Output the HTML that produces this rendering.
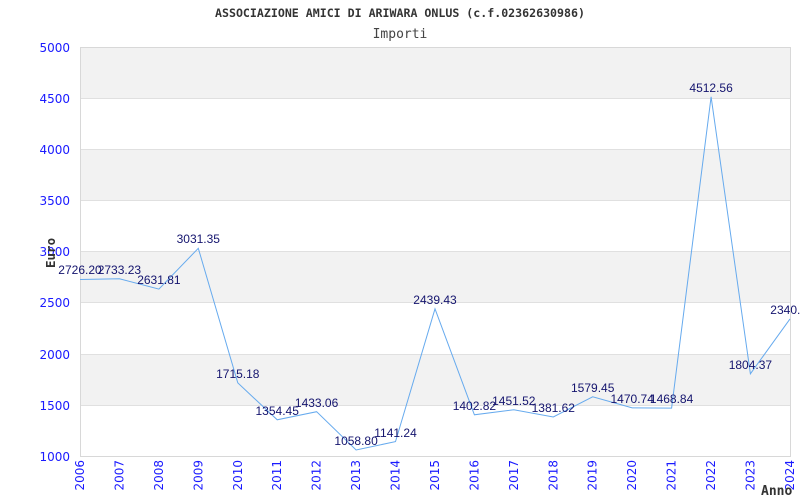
<!DOCTYPE html>
<html><head><meta charset="utf-8"><style>
html,body{margin:0;padding:0;background:#fff;width:800px;height:500px;overflow:hidden}
svg{display:block}
.t{font-family:"DejaVu Sans Mono","Liberation Mono",monospace}
.l{font-family:"Liberation Sans",sans-serif;font-size:12px;fill:#14146e;text-anchor:middle}
.ax{font-family:"DejaVu Sans","Liberation Sans",sans-serif;font-size:12px;fill:#1a1aff}
</style></head><body>
<svg width="800" height="500" xmlns="http://www.w3.org/2000/svg">
<text x="400" y="17" class="t" font-size="11.6" font-weight="bold" fill="#333" text-anchor="middle">ASSOCIAZIONE AMICI DI ARIWARA ONLUS (c.f.02362630986)</text>
<text x="400" y="38" class="t" font-size="13" fill="#444" text-anchor="middle">Importi</text>
<rect x="80" y="47" width="710" height="409" fill="#fff"/>
<rect x="80" y="47" width="710" height="51" fill="#f2f2f2"/>
<rect x="80" y="149" width="710" height="51" fill="#f2f2f2"/>
<rect x="80" y="251" width="710" height="51" fill="#f2f2f2"/>
<rect x="80" y="354" width="710" height="51" fill="#f2f2f2"/>
<g stroke="#e0e0e0" stroke-width="1">
<line x1="80" y1="98.5" x2="790" y2="98.5"/><line x1="80" y1="149.5" x2="790" y2="149.5"/>
<line x1="80" y1="200.5" x2="790" y2="200.5"/><line x1="80" y1="251.5" x2="790" y2="251.5"/>
<line x1="80" y1="302.5" x2="790" y2="302.5"/><line x1="80" y1="354.5" x2="790" y2="354.5"/>
<line x1="80" y1="405.5" x2="790" y2="405.5"/>
</g>
<rect x="80.5" y="47.5" width="710" height="409" fill="none" stroke="#d8d8d8"/>
<g class="ax" text-anchor="end">
<text x="70" y="52">5000</text><text x="70" y="103">4500</text><text x="70" y="154">4000</text>
<text x="70" y="205">3500</text><text x="70" y="256">3000</text><text x="70" y="307">2500</text>
<text x="70" y="359">2000</text><text x="70" y="410">1500</text><text x="70" y="461">1000</text>
</g>
<g class="ax" text-anchor="end">
<text transform="translate(84,460) rotate(-90)">2006</text>
<text transform="translate(123.4,460) rotate(-90)">2007</text>
<text transform="translate(162.9,460) rotate(-90)">2008</text>
<text transform="translate(202.3,460) rotate(-90)">2009</text>
<text transform="translate(241.8,460) rotate(-90)">2010</text>
<text transform="translate(281.2,460) rotate(-90)">2011</text>
<text transform="translate(320.6,460) rotate(-90)">2012</text>
<text transform="translate(360.1,460) rotate(-90)">2013</text>
<text transform="translate(399.5,460) rotate(-90)">2014</text>
<text transform="translate(439,460) rotate(-90)">2015</text>
<text transform="translate(478.4,460) rotate(-90)">2016</text>
<text transform="translate(517.8,460) rotate(-90)">2017</text>
<text transform="translate(557.3,460) rotate(-90)">2018</text>
<text transform="translate(596.7,460) rotate(-90)">2019</text>
<text transform="translate(636.2,460) rotate(-90)">2020</text>
<text transform="translate(675.6,460) rotate(-90)">2021</text>
<text transform="translate(715.1,460) rotate(-90)">2022</text>
<text transform="translate(754.4,460) rotate(-90)">2023</text>
<text transform="translate(794,460) rotate(-90)">2024</text>
</g>
<text transform="translate(55,268) rotate(-90)" class="t" font-size="12.5" font-weight="bold" fill="#333">Euro</text>
<text x="761" y="495" class="t" font-size="13" font-weight="bold" fill="#333">Anno</text>
<polyline fill="none" stroke="#66aaee" stroke-width="1" points="80,279.5 119.4,278.8 158.9,289.1 198.3,248.3 237.8,382.9 277.2,419.8 316.6,411.7 356.1,450 395.5,441.6 435,308.8 474.4,414.8 513.8,409.8 553.3,417 592.7,396.8 632.2,407.9 671.6,408.1 711.1,96.8 750.4,373.8 790,318.9"/>
<g class="l">
<text x="80" y="274">2726.20</text>
<text x="119.4" y="274">2733.23</text>
<text x="158.9" y="284">2631.81</text>
<text x="198.3" y="243">3031.35</text>
<text x="237.8" y="378">1715.18</text>
<text x="277.2" y="415">1354.45</text>
<text x="316.6" y="407">1433.06</text>
<text x="356.1" y="445">1058.80</text>
<text x="395.5" y="437">1141.24</text>
<text x="435" y="304">2439.43</text>
<text x="474.4" y="410">1402.82</text>
<text x="513.8" y="405">1451.52</text>
<text x="553.3" y="412">1381.62</text>
<text x="592.7" y="392">1579.45</text>
<text x="632.2" y="403">1470.74</text>
<text x="671.6" y="403">1468.84</text>
<text x="711.1" y="92">4512.56</text>
<text x="750.4" y="369">1804.37</text>
<text x="792" y="314">2340.50</text>
</g>
</svg>
</body></html>
